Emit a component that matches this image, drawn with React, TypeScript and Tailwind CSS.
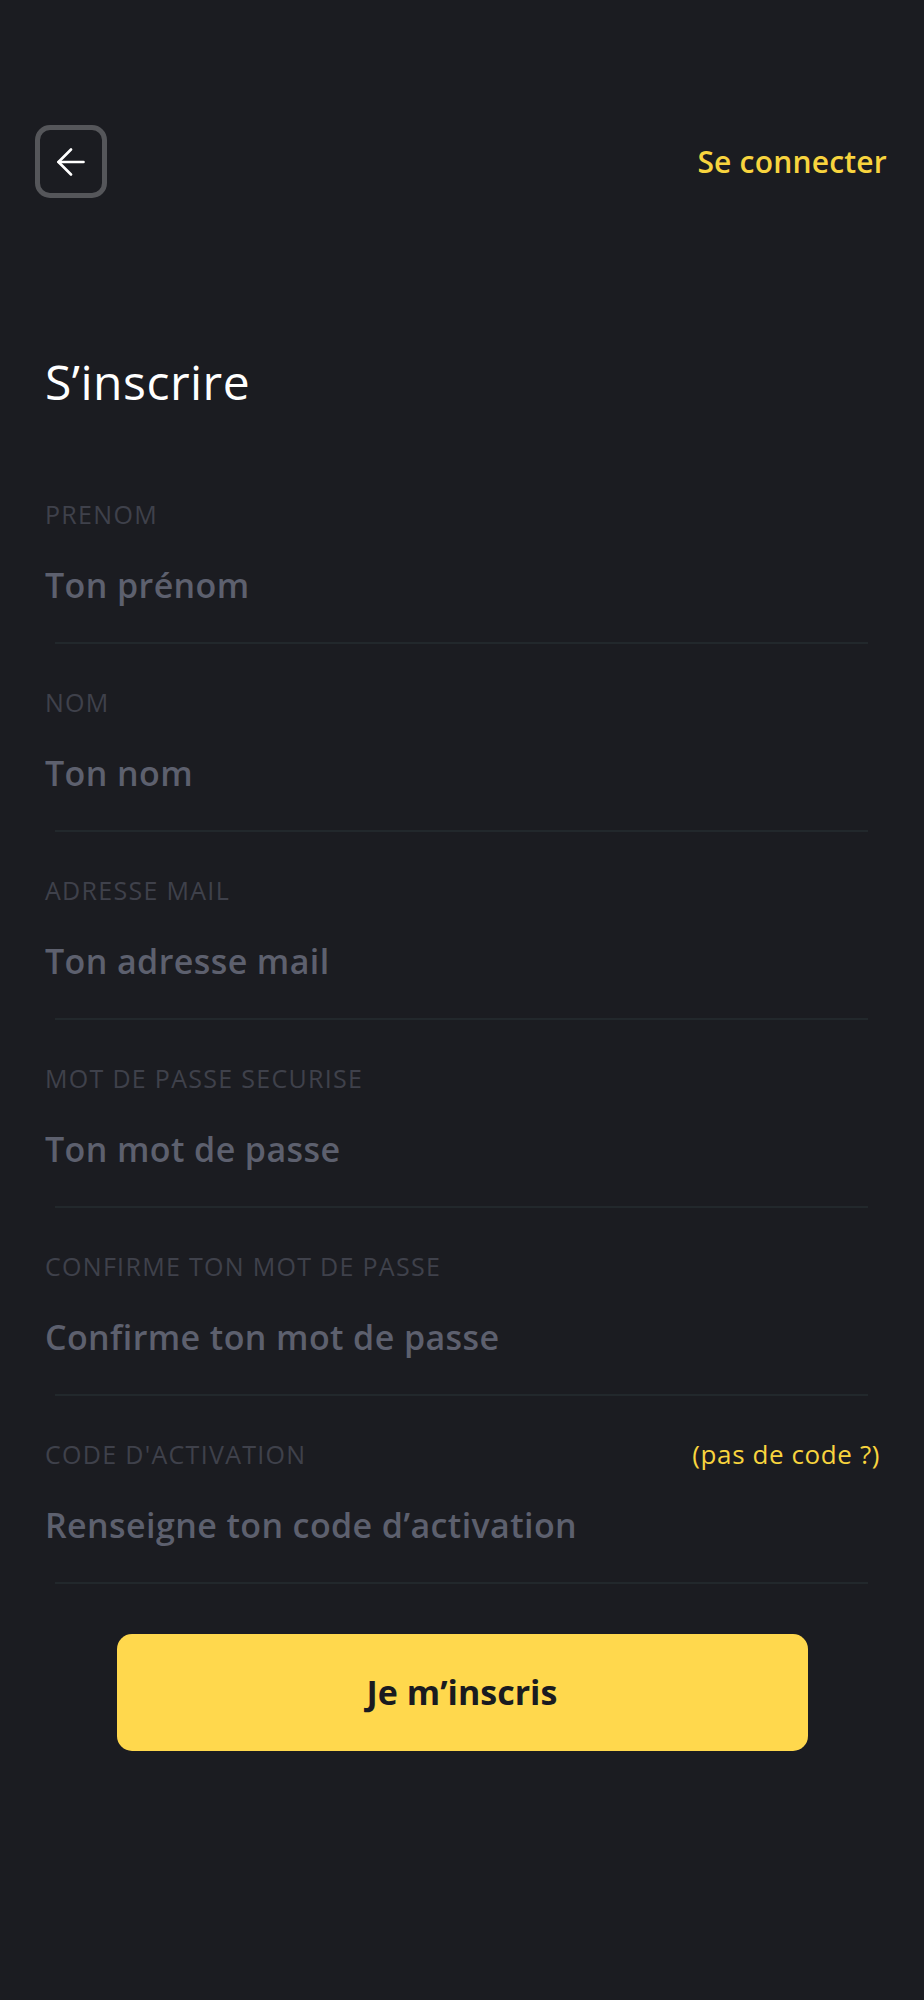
import { useState } from 'react';

const fields = [
  { id: 'prenom', label: 'PRENOM', placeholder: 'Ton prénom', type: 'text' },
  { id: 'nom', label: 'NOM', placeholder: 'Ton nom', type: 'text' },
  { id: 'email', label: 'ADRESSE MAIL', placeholder: 'Ton adresse mail', type: 'email' },
  { id: 'password', label: 'MOT DE PASSE SECURISE', placeholder: 'Ton mot de passe', type: 'password' },
  { id: 'confirm', label: 'CONFIRME TON MOT DE PASSE', placeholder: 'Confirme ton mot de passe', type: 'password' },
  { id: 'code', label: "CODE D'ACTIVATION", placeholder: 'Renseigne ton code d’activation', type: 'text', extra: '(pas de code ?)' },
];

export default function App() {
  const [values, setValues] = useState<Record<string, string>>({});

  return (
    <div className="min-h-[2000px] bg-[#1b1c21] font-['Open_Sans',sans-serif]">
      {/* Header */}
      <header className="flex items-center justify-between pl-[35px] pr-[37px] pt-[125px]">
        <button className="flex h-[73px] w-[72px] items-center justify-center rounded-[15px] border-[5px] border-[#55565a]">
          <svg width="28" height="28" viewBox="0 0 28 28" fill="none" stroke="white" strokeWidth="2.6" strokeLinecap="round" strokeLinejoin="round">
            <path d="M1.5 14H26.5" />
            <path d="M14 1.5L1.5 14L14 26.5" />
          </svg>
        </button>
        <button className="text-[30px] font-semibold tracking-[0.2px] text-[#f8d43e]">Se connecter</button>
      </header>

      {/* Title */}
      <h1 className="mt-[156px] pl-[45px] text-[48px] leading-[56px] font-medium tracking-[0.5px] text-white">S’inscrire</h1>

      {/* Form */}
      <form className="mt-[89px]" onSubmit={(e) => e.preventDefault()}>
        {fields.map((f) => (
          <div key={f.id} className="pt-[43px] first:pt-0">
            <div className="flex items-center justify-between pl-[45px] pr-[44px]">
              <label htmlFor={f.id} className="text-[25px] leading-[30px] tracking-[1.3px] text-[#3f414b]">
                {f.label}
              </label>
              {f.extra && <button type="button" className="text-[26px] leading-[30px] tracking-[0.6px] text-[#f8d43e]">{f.extra}</button>}
            </div>
            <input
              id={f.id}
              type={f.type === 'password' ? 'password' : 'text'}
              value={values[f.id] ?? ''}
              onChange={(e) => setValues({ ...values, [f.id]: e.target.value })}
              placeholder={f.placeholder}
              className="mt-[34px] block h-[44px] w-full bg-transparent pl-[45px] text-[34px] font-semibold tracking-[0.4px] text-white outline-none placeholder:text-[#5d606e]"
            />
            <div className="ml-[55px] mr-[56px] mt-[35px] h-[2px] bg-[#22282c]" />
          </div>
        ))}

        <div className="flex justify-center pt-[50px]">
          <button className="h-[117px] w-[691px] rounded-[15px] bg-[#ffd84d] text-[34px] font-bold text-[#1a1b20]">
            Je m’inscris
          </button>
        </div>
      </form>
    </div>
  );
}
